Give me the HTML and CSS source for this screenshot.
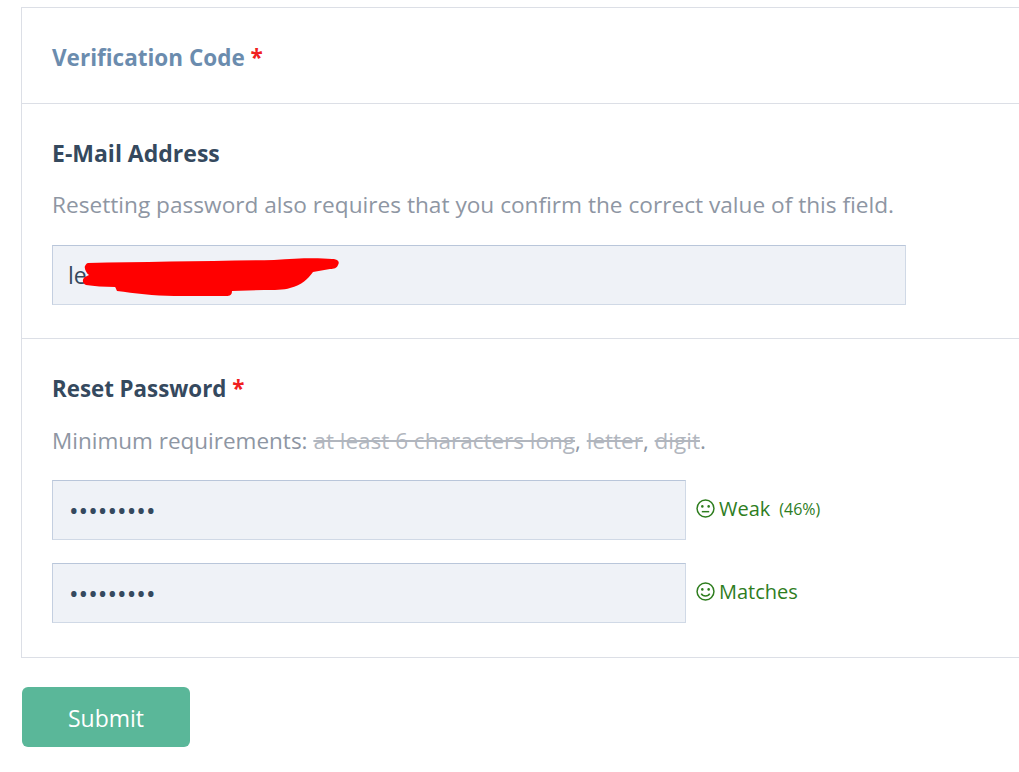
FILE: index.html
```html
<!DOCTYPE html>
<html>

<head>
  <meta charset="UTF-8">
  <title>Reset Password</title>
  <link rel="stylesheet" href="styles.css">
</head>

<body>
  <form class="reset-form">
    <div class="panel">
      <div class="field field-code">
        <label class="code-label">Verification Code <span class="required">*</span></label>
      </div>

      <div class="field field-email">
        <label class="field-label">E-Mail Address</label>
        <p class="help">Resetting password also requires that you confirm the correct value of this field.</p>
        <div class="email-wrap">
          <input type="text" class="text-input email-input" value="le">
          <!-- redacted address -->
          <svg class="scribble" width="270" height="48" viewBox="0 0 270 48">
            <path fill="#ff0000" d="M4 8 C60 7 130 6 190 5 C215 3 235 3 248 4 C254 4 256 7 254 10 C253 13 250 14 246 14 L229 17 C224 24 218 30 206 33 C200 35 190 35 180 35 L148 36 C148 40 146 41 142 41 L90 41 C70 41 50 38 33 36 C32 34 32 33 31 32 C20 32 10 31 2 30 C-2 28 -2 24 1 22 L5 20 C2 18 0 13 1 11 C2 9 3 8 4 8 Z"/>
          </svg>
        </div>
      </div>

      <div class="field field-password">
        <label class="field-label">Reset Password <span class="required">*</span></label>
        <p class="help">Minimum requirements: <s class="met">at least 6 characters long</s>, <s class="met">letter</s>, <s class="met">digit</s>.</p>
        <div class="password-row">
          <input type="password" class="text-input password-input" value="password1">
          <span class="hint">
            <svg class="face" width="19" height="19" viewBox="0 0 18 18">
              <circle cx="9" cy="9" r="8" fill="none" stroke="currentColor" stroke-width="1.4"/>
              <circle cx="6" cy="7" r="1.2" fill="currentColor"/>
              <circle cx="12" cy="7" r="1.2" fill="currentColor"/>
              <path d="M5.500 12 H12.500" fill="none" stroke="currentColor" stroke-width="1.4"/>
            </svg>
            Weak <small class="percent">(46%)</small>
          </span>
        </div>
        <div class="password-row">
          <input type="password" class="text-input password-input" value="password1">
          <span class="hint">
            <svg class="face" width="19" height="19" viewBox="0 0 18 18">
              <circle cx="9" cy="9" r="8" fill="none" stroke="currentColor" stroke-width="1.4"/>
              <circle cx="6" cy="7" r="1.2" fill="currentColor"/>
              <circle cx="12" cy="7" r="1.2" fill="currentColor"/>
              <path d="M5 11 C6.500 14 11.500 14 13 11" fill="none" stroke="currentColor" stroke-width="1.4"/>
            </svg>
            Matches
          </span>
        </div>
      </div>
    </div>

    <button type="button" class="submit">Submit</button>
  </form>
</body>

</html>
```

FILE: styles.css
```css
html,
body {
  margin: 0;
  padding: 0;
  height: 100%;
  overflow: hidden;
  background-color: white;
}

body {
  font-family: "Open Sans", "Noto Sans", sans-serif;
  font-size: 23px;
  color: #35495e;
}

.reset-form {
  padding: 7px 0 0 21px;
}

.panel {
  width: 1040px;
  border: 1px solid #dcdfe6;
}

.field {
  padding: 34px 30px 30px;
  border-bottom: 1px solid #dcdfe6;
  box-sizing: border-box;
}

.field:last-child {
  border-bottom: none;
}

.field-code {
  height: 96px;
  padding-top: 35px;
}

.field-email {
  height: 235px;
}

.field-password {
  height: 318px;
  padding-top: 35px;
}

.code-label,
.field-label {
  display: block;
  font-size: 22.5px;
  font-weight: 700;
  line-height: 30px;
}

.field-email .field-label {
  font-size: 23px;
}

.field-password .field-label {
  font-size: 22.3px;
}

.code-label {
  color: #6b8cae;
}

.required {
  color: #f02020;
}

.help {
  margin: 22px 0 25px;
  font-size: 22.65px;
  line-height: 30px;
  color: #8e96a3;
}

.field-password .help {
  margin: 22px 0 24px;
  font-size: 22.5px;
}

.met {
  color: #b1b6be;
}

.email-wrap {
  position: relative;
  width: 854px;
}

.text-input {
  display: block;
  box-sizing: border-box;
  height: 60px;
  padding: 0 16px;
  border: 1px solid #d0d9e6;
  border-top-color: #b9c6da;
  border-left-color: #c4cfe0;
  border-radius: 0;
  background-color: #eff2f7;
  font-family: inherit;
  font-size: 23px;
  color: #35495e;
}

.email-input {
  width: 854px;
  padding-left: 15px;
}

.scribble {
  position: absolute;
  left: 32px;
  top: 10px;
  overflow: visible;
}

.password-row {
  display: flex;
  align-items: center;
  gap: 10px;
  margin-bottom: 23px;
}

.password-row:last-child {
  margin-bottom: 0;
}

.password-input {
  width: 634px;
  font-size: 25.6px;
}

.hint {
  display: flex;
  align-items: center;
  gap: 4px;
  padding-bottom: 4px;
  font-size: 20px;
  color: #2e7d1e;
}

.percent {
  margin: 2px 0 0 5px;
  font-size: 16px;
}

.submit {
  display: block;
  box-sizing: border-box;
  width: 168px;
  height: 60px;
  margin: 29px 0 0 1px;
  padding-top: 2px;
  border: none;
  border-radius: 6px;
  background-color: #5ab799;
  color: white;
  font-family: inherit;
  font-size: 23px;
}
```
